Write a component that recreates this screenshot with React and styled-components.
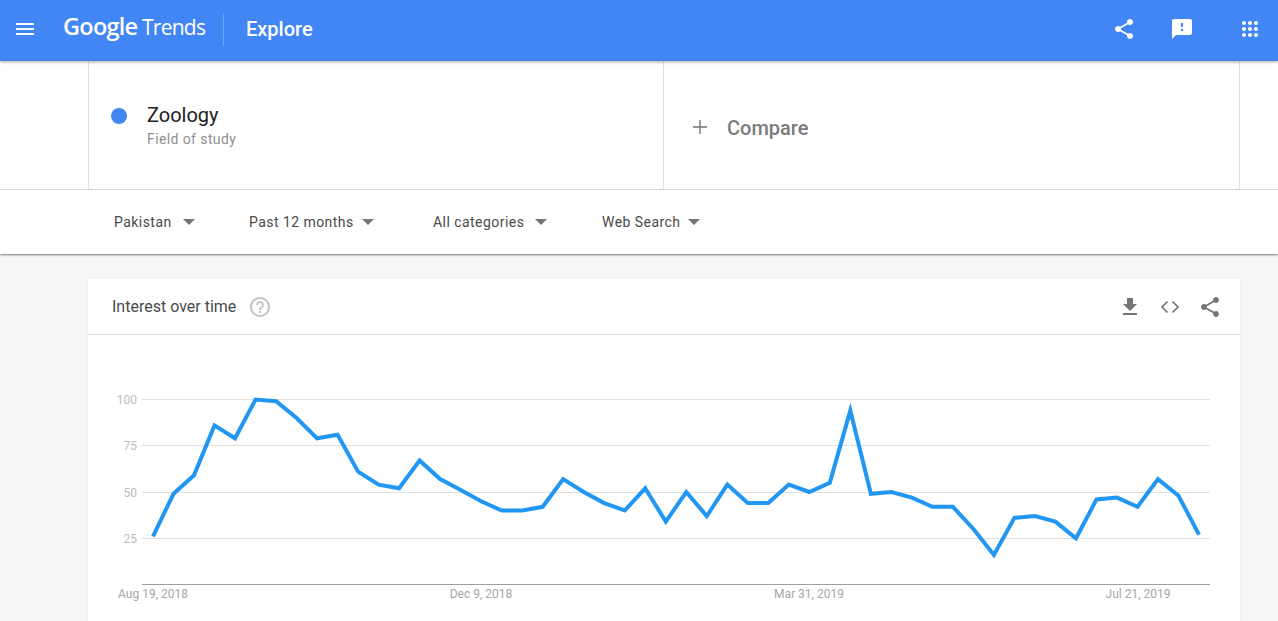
import React from "react";
import styled, { createGlobalStyle } from "styled-components";

const Global = createGlobalStyle`
  html, body { margin: 0; padding: 0; height: 100%; overflow: hidden; background: #f6f6f6; }
  body { font-family: Roboto, "Liberation Sans", sans-serif; }
`;

const Page = styled.div`
  width: 1278px;
  height: 621px;
  overflow: hidden;
  display: flex;
  flex-direction: column;
  background: #f6f6f6;
`;

const Header = styled.header`
  position: relative;
  z-index: 3;
  flex: none;
  height: 61px;
  box-sizing: border-box;
  padding-bottom: 3px;
  background: #4285f4;
  box-shadow: 0 1px 3px rgba(0, 0, 0, 0.35);
  display: flex;
  align-items: center;
  color: #fff;
`;

const MenuButton = styled.div`
  flex: none;
  width: 50px;
  display: flex;
  align-items: center;
  justify-content: center;
`;

const Logo = styled.div`
  flex: none;
  margin-left: 13px;
  width: 146px;
  display: flex;
  align-items: baseline;
  white-space: nowrap;
  margin-bottom: 6px;
`;

const LogoGoogle = styled.span`
  font-family: "Open Sans", sans-serif;
  font-size: 23.5px;
  font-weight: 600;
  letter-spacing: -0.75px;
  width: 79px;
`;

const LogoTrends = styled.span`
  font-family: "Open Sans", sans-serif;
  font-size: 21px;
  font-weight: 400;
  letter-spacing: -0.75px;
`;

const HeaderDivider = styled.div`
  flex: none;
  width: 1px;
  height: 33px;
  margin-left: 14px;
  background: rgba(255, 255, 255, 0.25);
`;

const PageTitle = styled.div`
  flex: 1;
  margin: 0 0 1px 22px;
  font-size: 20px;
  font-weight: 500;
  line-height: 24px;
`;

const HeaderIcons = styled.div`
  display: flex;
  align-items: center;
  margin-right: 16px;
`;

const HeaderIcon = styled.span`
  display: flex;
  margin-left: ${(p) => p.$gap}px;
`;

const SearchBar = styled.section`
  flex: none;
  height: 128px;
  background: #fff;
  border-bottom: 1px solid #e0e0e0;
  padding-left: 88px;
  display: flex;
`;

const TermCell = styled.div`
  width: 575px;
  box-sizing: border-box;
  border-left: 1px solid #e0e0e0;
  display: flex;
  align-items: flex-start;
  padding: 41px 0 0 22px;
`;

const Dot = styled.span`
  flex: none;
  width: 16px;
  height: 16px;
  margin: 6px 20px 0 0;
  border-radius: 50%;
  background: #4285f4;
`;

const TermName = styled.div`
  font-size: 20px;
  line-height: 26px;
  color: #212121;
`;

const TermType = styled.div`
  font-size: 14px;
  line-height: 20px;
  margin-top: 1px;
  letter-spacing: 0.4px;
  color: #8f8f8f;
`;

const CompareCell = styled.div`
  width: 577px;
  box-sizing: border-box;
  border-left: 1px solid #e0e0e0;
  border-right: 1px solid #e0e0e0;
  display: flex;
  align-items: center;
  padding: 5px 0 0 28px;
  gap: 19px;
  font-size: 20px;
  font-weight: 500;
  color: #7b7b7b;
`;

const PlusIcon = styled.svg`
  margin-top: -2px;
`;

const FilterBar = styled.nav`
  position: relative;
  z-index: 2;
  flex: none;
  height: 64px;
  background: #fff;
  box-shadow: 0 1px 2px rgba(0, 0, 0, 0.5);
  padding-left: 114px;
  display: flex;
  align-items: center;
`;

const Filter = styled.div`
  display: flex;
  align-items: center;
  font-size: 14px;
  letter-spacing: 0.45px;
  color: #4a4a4a;
  width: ${(p) => p.$w}px;
  margin-bottom: 1px;
`;

const Caret = styled.span`
  width: 0;
  height: 0;
  margin-left: ${(p) => p.$gap}px;
  border-left: 6px solid transparent;
  border-right: 6px solid transparent;
  border-top: 6px solid #757575;
`;

const Main = styled.main`
  flex: 1;
  padding: 25px 38px 0 88px;
`;

const Card = styled.article`
  background: #fff;
  box-shadow: 0 0 2px rgba(0, 0, 0, 0.06);
  height: 400px;
`;

const CardHeader = styled.div`
  height: 56px;
  box-sizing: border-box;
  border-bottom: 1px solid #e0e0e0;
  display: flex;
  align-items: center;
  padding: 0 18px 0 24px;
`;

const CardTitle = styled.h2`
  margin: 0;
  font-size: 16px;
  font-weight: 400;
  color: #4a4a4a;
`;

const Help = styled.span`
  flex: 1;
  display: flex;
  margin-left: 12px;
`;

const CardTools = styled.div`
  display: flex;
  align-items: center;
  gap: 16px;
`;

const AxisText = styled.text`
  font-family: Roboto, sans-serif;
  font-size: ${(p) => p.$size}px;
  fill: ${(p) => p.$fill};
`;

const values = [26,49,59,86,79,100,99,90,79,81,61,54,52,67,57,51,45,40,40,42,57,50,44,40,52,34,50,37,54,44,44,54,50,55,94,49,50,47,42,42,30,16,36,37,34,25,46,47,42,57,48,27];

function Chart() {
  const xOf = (i) => 65 + i * 20.51;
  const yOf = (v) => 249.5 - v * 1.85;
  const pts = values.map((v, i) => `${xOf(i).toFixed(1)},${yOf(v).toFixed(1)}`).join(" ");
  return (
    <svg width="1152" height="286" viewBox="0 0 1152 286" style={{ display: "block" }}>
      {[100, 75, 50, 25].map((t) => (
        <g key={t}>
          <line x1="54" x2="1122" y1={Math.floor(yOf(t)) + 0.5} y2={Math.floor(yOf(t)) + 0.5} stroke="#e0e0e0" />
          <AxisText $size={12} $fill="#bdbdbd" x="49" y={yOf(t) + 4.5} textAnchor="end">{t}</AxisText>
        </g>
      ))}
      <line x1="54" x2="1122" y1="249.5" y2="249.5" stroke="#9e9e9e" />
      {[["Aug 19, 2018", 65], ["Dec 9, 2018", 393], ["Mar 31, 2019", 721], ["Jul 21, 2019", 1050]].map(([t, x]) => (
        <AxisText key={t} $size={12} $fill="#a6a6a6" x={x} y="262.5" textAnchor="middle">{t}</AxisText>
      ))}
      <polyline points={pts} fill="none" stroke="#2196f3" strokeWidth="4" strokeLinejoin="miter" />
    </svg>
  );
}

const ShareIcon = ({ fill, size = 24 }) => (
  <svg width={size} height={size} viewBox="0 0 24 24" fill={fill}>
    <path d="M18 16.08c-.76 0-1.44.3-1.96.77L8.91 12.7c.05-.23.09-.46.09-.7s-.04-.47-.09-.7l7.05-4.11c.54.5 1.25.81 2.04.81 1.66 0 3-1.34 3-3s-1.34-3-3-3-3 1.34-3 3c0 .24.04.47.09.7L8.04 9.81C7.5 9.31 6.79 9 6 9c-1.66 0-3 1.34-3 3s1.34 3 3 3c.79 0 1.5-.31 2.04-.81l7.12 4.16c-.05.21-.08.43-.08.65 0 1.61 1.31 2.92 2.92 2.92s2.92-1.31 2.92-2.92-1.31-2.92-2.92-2.92z" />
  </svg>
);

export default function App() {
  return (
    <Page>
      <Global />
      <Header>
        <MenuButton>
          <svg width="24" height="24" viewBox="0 0 24 24" fill="#fff"><path d="M3 18h18v-2H3v2zm0-5h18v-2H3v2zm0-7v2h18V6H3z" /></svg>
        </MenuButton>
        <Logo>
          <LogoGoogle>Google</LogoGoogle>
          <LogoTrends>Trends</LogoTrends>
        </Logo>
        <HeaderDivider />
        <PageTitle>Explore</PageTitle>
        <HeaderIcons>
          <HeaderIcon $gap={0}><ShareIcon fill="#fff" /></HeaderIcon>
          <HeaderIcon $gap={34}>
            <svg width="24" height="24" viewBox="0 0 24 24" fill="#fff"><path d="M20 2H4c-1.1 0-1.99.9-1.99 2L2 22l4-4h14c1.1 0 2-.9 2-2V4c0-1.1-.9-2-2-2zm-7 12h-2v-2h2v2zm0-4h-2V6h2v4z" /></svg>
          </HeaderIcon>
          <HeaderIcon $gap={44}>
            <svg width="24" height="24" viewBox="0 0 24 24" fill="#fff"><path d="M6 8c1.1 0 2-.9 2-2s-.9-2-2-2-2 .9-2 2 .9 2 2 2zm6 12c1.1 0 2-.9 2-2s-.9-2-2-2-2 .9-2 2 .9 2 2 2zm-6 0c1.1 0 2-.9 2-2s-.9-2-2-2-2 .9-2 2 .9 2 2 2zm0-6c1.1 0 2-.9 2-2s-.9-2-2-2-2 .9-2 2 .9 2 2 2zm6 0c1.1 0 2-.9 2-2s-.9-2-2-2-2 .9-2 2 .9 2 2 2zm4-8c0 1.1.9 2 2 2s2-.9 2-2-.9-2-2-2-2 .9-2 2zm-4 2c1.1 0 2-.9 2-2s-.9-2-2-2-2 .9-2 2 .9 2 2 2zm6 6c1.1 0 2-.9 2-2s-.9-2-2-2-2 .9-2 2 .9 2 2 2zm0 6c1.1 0 2-.9 2-2s-.9-2-2-2-2 .9-2 2 .9 2 2 2z" /></svg>
          </HeaderIcon>
        </HeaderIcons>
      </Header>

      <SearchBar>
        <TermCell>
          <Dot />
          <div>
            <TermName>Zoology</TermName>
            <TermType>Field of study</TermType>
          </div>
        </TermCell>
        <CompareCell>
          <PlusIcon width="16" height="16" viewBox="0 0 16 16" fill="#757575"><path d="M7.3 1h1.4v6.3H15v1.4H8.7V15H7.3V8.7H1V7.3h6.3z" /></PlusIcon>
          Compare
        </CompareCell>
      </SearchBar>

      <FilterBar>
        <Filter $w={135}>Pakistan<Caret $gap={11} /></Filter>
        <Filter $w={184}>Past 12 months<Caret $gap={8} /></Filter>
        <Filter $w={169}>All categories<Caret $gap={11} /></Filter>
        <Filter $w={120}>Web Search<Caret $gap={8} /></Filter>
      </FilterBar>

      <Main>
        <Card>
          <CardHeader>
            <CardTitle>Interest over time</CardTitle>
            <Help>
              <svg width="24" height="24" viewBox="0 0 24 24" fill="#c4c4c4"><path d="M11 18h2v-2h-2v2zm1-16C6.48 2 2 6.48 2 12s4.48 10 10 10 10-4.48 10-10S17.52 2 12 2zm0 18c-4.41 0-8-3.59-8-8s3.59-8 8-8 8 3.59 8 8-3.59 8-8 8zm0-14c-2.21 0-4 1.79-4 4h2c0-1.1.9-2 2-2s2 .9 2 2c0 2-3 1.75-3 5h2c0-2.25 3-2.5 3-5 0-2.21-1.79-4-4-4z" /></svg>
            </Help>
            <CardTools>
              <svg width="24" height="24" viewBox="0 0 24 24" fill="#757575"><path d="M19 9h-4V3H9v6H5l7 7 7-7zM5 18v2h14v-2H5z" /></svg>
              <svg width="24" height="24" viewBox="0 0 24 24" fill="none" stroke="#757575" strokeWidth="1.7"><path d="M9.5 6.5L4 12l5.5 5.5M14.5 6.5L20 12l-5.5 5.5" /></svg>
              <ShareIcon fill="#757575" />
            </CardTools>
          </CardHeader>
          <Chart />
        </Card>
      </Main>
    </Page>
  );
}
